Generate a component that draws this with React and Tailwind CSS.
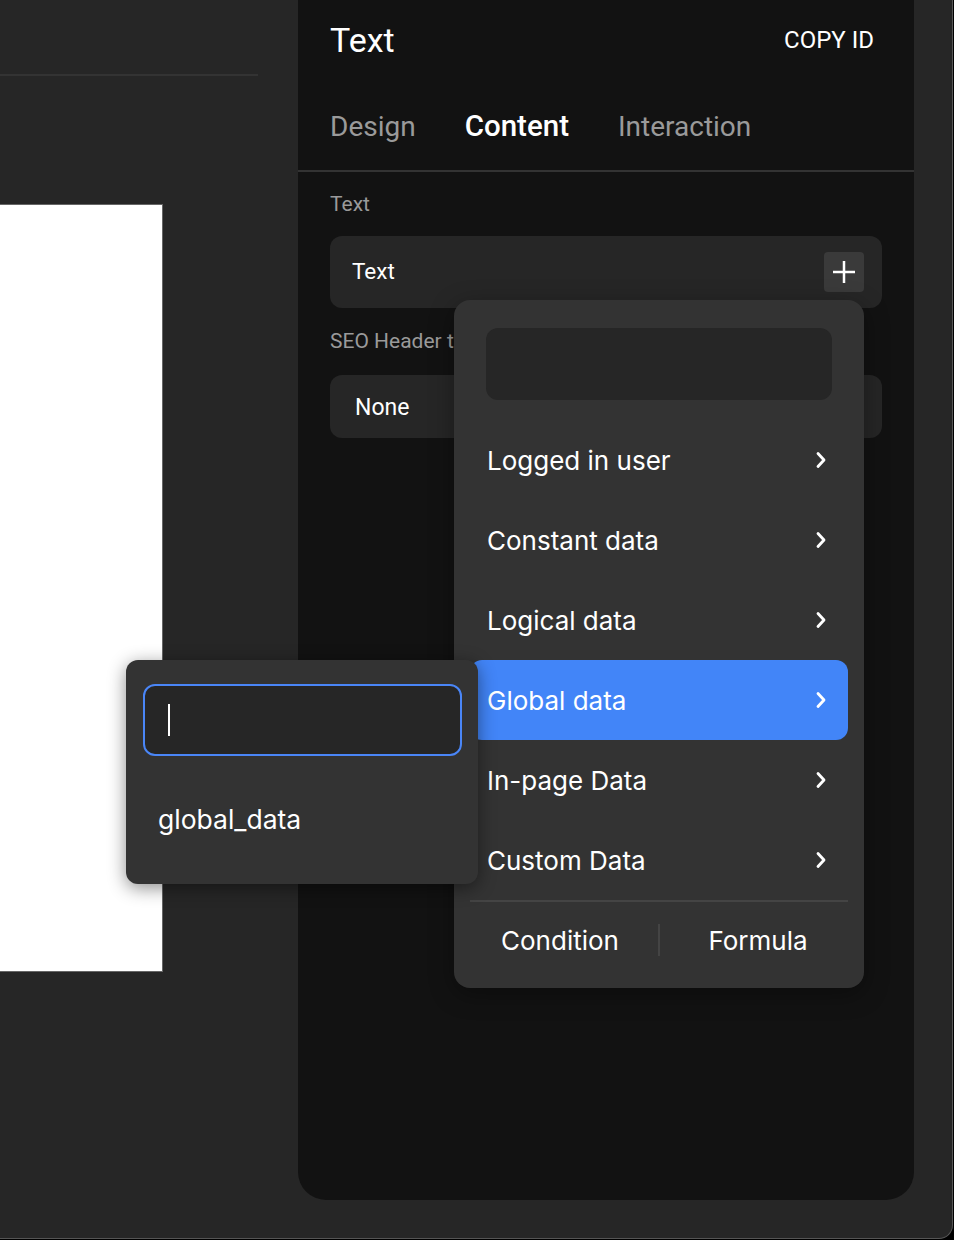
import React from "react";

const Chevron = () => (
  <svg width="14" height="18" viewBox="0 0 14 18" fill="none">
    <polyline points="4,2.5 10,9 4,15.5" stroke="white" strokeWidth="2.8" strokeLinecap="round" strokeLinejoin="round" />
  </svg>
);

const items = ["Logged in user", "Constant data", "Logical data", "Global data", "In-page Data", "Custom Data"];

export default function App() {
  return (
    <div className="w-[954px] h-[1240px] bg-black">
      <div className="relative w-[953px] h-[1239px] bg-[#262626] border-r border-b border-[#555] rounded-br-[14px] overflow-hidden flex" style={{ fontFamily: "Roboto, sans-serif" }}>
        {/* Left canvas */}
        <div className="w-[298px] shrink-0 pt-[74px]">
          <div className="h-[2px] w-[258px] bg-[#333]" />
          <div className="mt-[128px] h-[768px] w-[163px] bg-white border-y border-r border-[#666]" />
        </div>

        {/* Panel */}
        <div className="w-[616px] shrink-0 h-[1200px] bg-[#121212] rounded-b-[28px]">
          <div className="h-[80px] flex items-center justify-between pl-[32px] pr-[40px]">
            <span className="text-[34px] text-white leading-none">Text</span>
            <span className="text-[24px] text-white leading-none">COPY ID</span>
          </div>
          <div className="h-[90px] flex items-center gap-[49px] pl-[32px] pt-[4px] text-[28px] leading-none">
            <span className="text-[#9a9a9a]">Design</span>
            <span className="text-white font-medium text-[29.5px]">Content</span>
            <span className="text-[#9a9a9a]">Interaction</span>
          </div>
          <div className="h-[2px] bg-[#333]" />
          <div className="px-[32px]">
            <div className="mt-[21px] h-[24px] flex items-center text-[21px] text-[#9a9a9a]">Text</div>
            <div className="mt-[19px] h-[72px] rounded-[12px] bg-[#262626] flex items-center justify-between pl-[22px] pr-[18px]">
              <span className="text-[22.5px] text-white">Text</span>
              <div className="w-[40px] h-[40px] rounded-[4px] bg-[#3a3a3a] flex items-center justify-center">
                <svg width="26" height="26" viewBox="0 0 26 26">
                  <path d="M13 2v22M2 13h22" stroke="white" strokeWidth="2.5" />
                </svg>
              </div>
            </div>
            <div className="mt-[22px] h-[24px] flex items-center text-[21px] text-[#9a9a9a] whitespace-nowrap">SEO Header tag</div>
            <div className="mt-[21px] h-[63px] rounded-[12px] bg-[#262626] flex items-center pl-[25px] pt-[4px]">
              <span className="text-[23px] text-white">None</span>
            </div>
          </div>
        </div>

        {/* Main dropdown */}
        <div className="absolute left-[454px] top-[300px] w-[410px] h-[688px] bg-[#333333] rounded-[16px] shadow-[0_6px_24px_rgba(0,0,0,0.35)] flex flex-col" style={{ fontFamily: "Inter, sans-serif" }}>
          <div className="mt-[28px] mx-[32px] h-[72px] rounded-[12px] bg-[#262626]" />
          <div className="mt-[20px] mx-[16px] flex flex-col">
            {items.map((label) => (
              <div
                key={label}
                className={`h-[80px] flex items-center justify-between pl-[17px] pr-[20px] rounded-[12px] ${label === "Global data" ? "bg-[#4285f8]" : ""}`}
              >
                <span className="text-[26px] text-white">{label}</span>
                <Chevron />
              </div>
            ))}
          </div>
          <div className="mx-[16px] h-[2px] bg-[#444]" />
          <div className="mx-[16px] h-[76px] flex items-center">
            <div className="flex-1 flex justify-center pr-[8px] text-[26px] text-white">Condition</div>
            <div className="w-[2px] h-[32px] bg-[#444]" />
            <div className="flex-1 flex justify-center pl-[8px] text-[26px] text-white">Formula</div>
          </div>
        </div>

        {/* Submenu */}
        <div className="absolute left-[126px] top-[660px] w-[352px] h-[224px] bg-[#333333] rounded-[12px] shadow-[0_4px_18px_rgba(0,0,0,0.45)]" style={{ fontFamily: "Inter, sans-serif" }}>
          <div className="mt-[24px] ml-[17px] w-[319px] h-[72px] rounded-[12px] bg-[#262626] border-2 border-[#4a86f7] flex items-center pl-[23px]">
            <div className="w-[2px] h-[32px] bg-white" />
          </div>
          <div className="mt-[40px] pl-[32px] h-[48px] flex items-center text-[26.5px] text-white">global_data</div>
        </div>
      </div>
    </div>
  );
}
